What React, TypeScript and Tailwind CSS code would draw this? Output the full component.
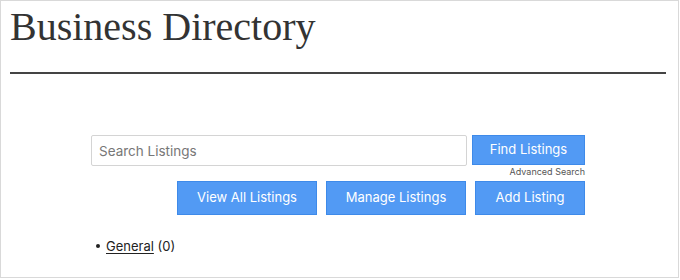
export default function App() {
  return (
    <div className="w-[679px] h-[278px] border border-[#d9d9d9] bg-white overflow-hidden">
      {/* ページタイトル */}
      <div className="pl-[9px] pr-[12px]">
        <h1 className="pt-[1px] h-[71px] text-[40px] leading-[50px] text-[#333] font-['Liberation_Serif',serif]">
          Business Directory
        </h1>
        <div className="h-[2px] bg-[#444]" />
      </div>

      {/* 検索フォーム */}
      <div className="w-[494px] ml-[90px] mt-[61px] font-['Inter',sans-serif]">
        <div className="flex gap-[5px]">
          <input
            type="text"
            placeholder="Search Listings"
            className="w-[376px] h-[31px] border border-[#d4d4d4] rounded-[2px] px-[7px] text-[13.5px] text-[#333] placeholder:text-[#777] outline-none"
          />
          <button className="w-[113px] h-[30px] bg-[#529af4] border border-[#3e8ae9] text-white text-[13px]">
            Find Listings
          </button>
        </div>
        <div className="flex justify-end h-[12px] text-[9px] leading-[12px] text-[#555]">
          Advanced Search
        </div>
        <div className="flex justify-end gap-[9px] mt-[3px]">
          <button className="w-[140px] h-[34px] bg-[#529af4] border border-[#3e8ae9] text-white text-[13px]">
            View All Listings
          </button>
          <button className="w-[140px] h-[34px] bg-[#529af4] border border-[#3e8ae9] text-white text-[13px]">
            Manage Listings
          </button>
          <button className="w-[110px] h-[34px] bg-[#529af4] border border-[#3e8ae9] text-white text-[13px]">
            Add Listing
          </button>
        </div>

        {/* カテゴリ一覧 */}
        <ul className="mt-[22px] ml-[5px] text-[13px] leading-[18px] text-[#222]">
          <li className="flex items-center gap-[6px]">
            <span className="w-[4px] h-[4px] rounded-full bg-[#222]" />
            <span>
              <span className="underline underline-offset-2">General</span> (0)
            </span>
          </li>
        </ul>
      </div>
    </div>
  )
}
